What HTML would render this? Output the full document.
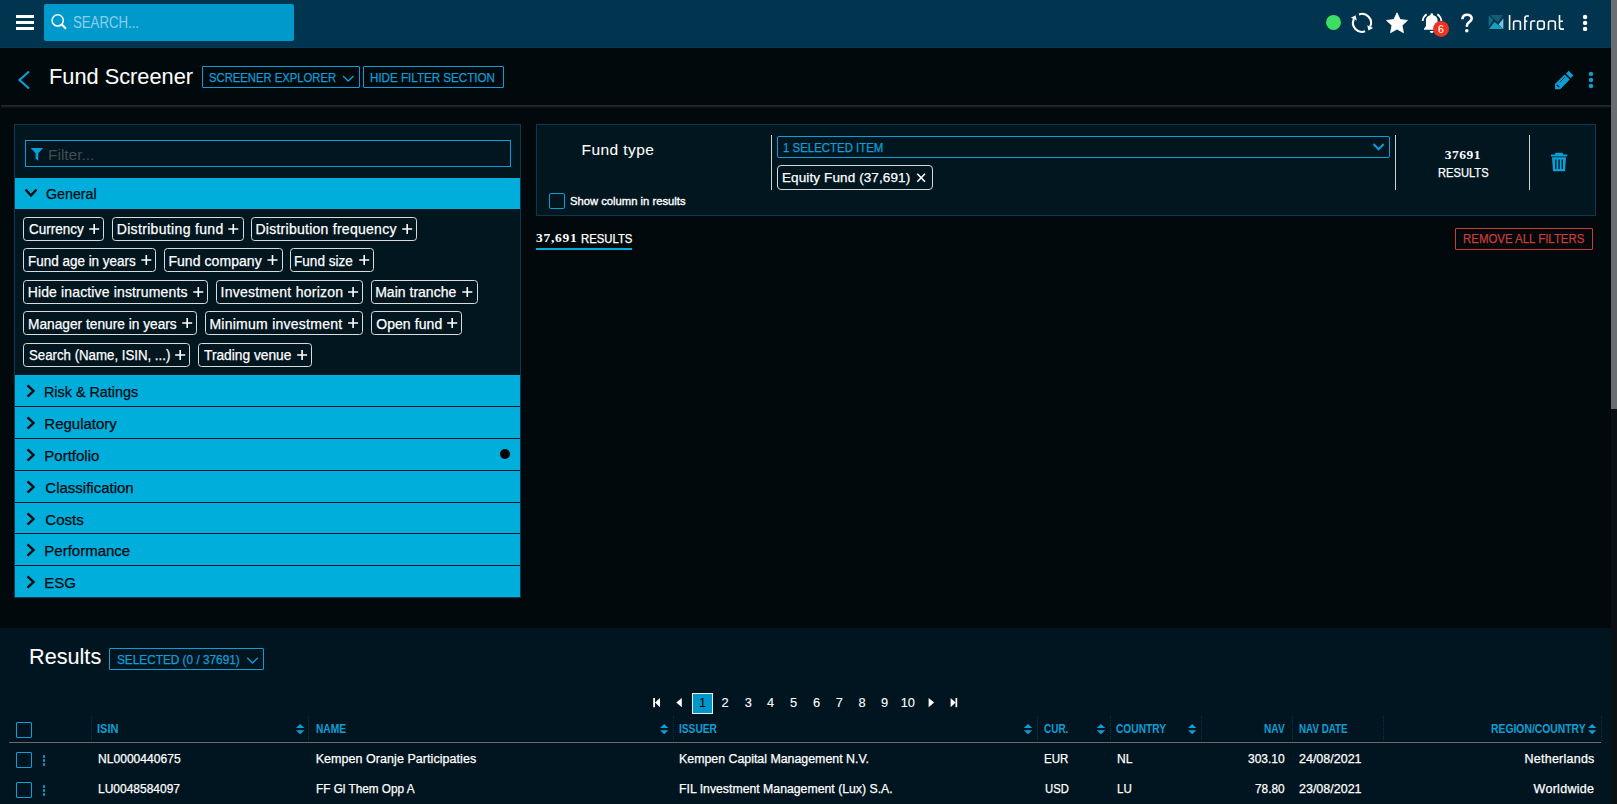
<!DOCTYPE html>
<html><head><meta charset="utf-8"><title>Fund Screener</title>
<style>
html,body{margin:0;padding:0;width:1617px;height:804px;overflow:hidden;background:#01090d;font-family:"Liberation Sans",sans-serif;}
.a{position:absolute;box-sizing:border-box;}
.t{position:absolute;white-space:pre;-webkit-text-stroke:0.25px currentColor;}
svg{position:absolute;overflow:visible;}
</style></head><body>
<!-- header -->
<div class="a" style="left:0;top:0;width:1611px;height:48px;background:#01354f"></div>
<div class="a" style="left:0;top:47px;width:1611px;height:1px;background:#013a56"></div>
<!-- hamburger -->
<div class="a" style="left:16px;top:15px;width:18px;height:3px;background:#fff"></div>
<div class="a" style="left:16px;top:21px;width:18px;height:3px;background:#fff"></div>
<div class="a" style="left:16px;top:27px;width:18px;height:3px;background:#fff"></div>
<!-- search -->
<div class="a" style="left:44px;top:4px;width:250px;height:37px;background:#0099cc;border-radius:2px"></div>
<svg style="left:0;top:0" width="1617" height="804">
  <circle cx="57.7" cy="20.4" r="5.6" fill="none" stroke="#fff" stroke-width="1.5"/>
  <line x1="61.8" y1="24.5" x2="66" y2="28.8" stroke="#fff" stroke-width="2"/>
</svg>
<!-- status icons -->
<svg style="left:0;top:0" width="1617" height="48">
  <circle cx="1333.5" cy="22.4" r="7.5" fill="#3ddf62"/>
  <!-- refresh -->
  <path d="M1358.92 14.44 A9 9 0 0 1 1370.22 26.56" fill="none" stroke="#fff" stroke-width="2.1"/>
  <path d="M1365.08 31.36 A9 9 0 0 1 1353.78 19.24" fill="none" stroke="#fff" stroke-width="2.1"/>
  <path d="M1373.06 28.06 L1367.26 25.35 L1368.38 30.51 Z M1350.94 17.74 L1356.74 20.45 L1355.62 15.29 Z" fill="#fff"/>
  <!-- star -->
  <path d="M1397.00 12.80 L1400.12 19.51 L1407.46 20.40 L1402.04 25.44 L1403.47 32.70 L1397.00 29.10 L1390.53 32.70 L1391.96 25.44 L1386.54 20.40 L1393.88 19.51 Z" fill="#fff" stroke="#fff" stroke-width="0.8" stroke-linejoin="round"/>
  <!-- bell -->
  <circle cx="1431.8" cy="14.6" r="1.3" fill="#fff"/>
  <path d="M1426 26 V20.5 C1426 17.3 1428.5 15 1431.8 15 C1435.1 15 1437.6 17.3 1437.6 20.5 V26 L1439.6 28.7 V29.8 H1424 V28.7 Z" fill="#fff"/>
  <path d="M1429.8 30.9 A2.0 2.0 0 0 0 1433.8 30.9 Z" fill="#fff"/>
  <path d="M1422.6 21.0 A9.4 9.4 0 0 1 1426.6 14.3" fill="none" stroke="#fff" stroke-width="1.8"/>
  <path d="M1437.4 14.3 A9.4 9.4 0 0 1 1441.4 21.0" fill="none" stroke="#fff" stroke-width="1.8"/>
  <circle cx="1441.05" cy="28.95" r="7.95" fill="#ec3420"/>
  <!-- question -->
  <path d="M1462.4 19.2 C1462.4 16.2 1464.5 14.7 1467.1 14.7 C1469.8 14.7 1471.7 16.3 1471.7 18.6 C1471.7 21.3 1468.4 22 1467.4 24 C1467 24.8 1466.9 25.8 1466.9 26.8" fill="none" stroke="#fff" stroke-width="2.6"/>
  <circle cx="1466.8" cy="30.7" r="1.7" fill="#fff"/>
  <!-- infront -->
  <path d="M1509.6 15 V29.9 M1513.6 29.9 V23 Q1513.6 21 1515.6 21 H1518.4 Q1520.4 21 1520.4 23 V29.9 M1524.9 29.9 V18 Q1524.9 16 1526.9 16 H1528.9 M1524.9 21.2 H1527.3 M1530.9 29.9 V23 Q1530.9 21 1532.9 21 H1535.3 M1539.6 21 H1542.2 Q1544.2 21 1544.2 23 V27.1 Q1544.2 29.1 1542.2 29.1 H1539.6 Q1537.6 29.1 1537.6 27.1 V23 Q1537.6 21 1539.6 21 Z M1548.5 29.9 V23 Q1548.5 21 1550.5 21 H1553.3 Q1555.3 21 1555.3 23 V29.9 M1559.5 15 V27.1 Q1559.5 29.1 1561.5 29.1 H1563.9 M1559.5 21.2 H1562.9" fill="none" stroke="#fff" stroke-width="1.6"/>
  <!-- kebab -->
  <circle cx="1585.1" cy="17" r="2.2" fill="#fff"/>
  <circle cx="1585.1" cy="22.9" r="2.2" fill="#fff"/>
  <circle cx="1585.1" cy="28.9" r="2.2" fill="#fff"/>
  <!-- logo -->
  <g>
    <path d="M1488.6 15.6 L1493.4 19.8 L1488.6 26.9 Z" fill="#136b86"/>
    <path d="M1489.6 15.1 L1503.3 15.1 L1497.9 22.3 L1494.3 19.3 Z" fill="#145a72"/>
    <path d="M1488.9 28.9 L1494.5 21.9 L1498.4 24.9 L1503.3 28.9 Z" fill="#1d9cc2"/>
    <path d="M1498.6 24.6 L1503.3 18.6 L1503.3 28.9 Z" fill="#78c7dd"/>
  </g>
</svg>
<!-- scrollbar -->
<div class="a" style="left:1611px;top:0;width:6px;height:804px;background:#0a1013"></div>
<div class="a" style="left:1611px;top:0;width:6px;height:409px;background:#6b6e70"></div>
<!-- title bar -->
<svg style="left:0;top:0" width="1617" height="120">
  <path d="M29 71.5 L19.5 80 L29 88.5" fill="none" stroke="#0c9fd6" stroke-width="2.2"/>
</svg>
<div class="a" style="left:202px;top:66px;width:158px;height:22px;border:1px solid #0c9fd6;border-radius:1px"></div>
<svg style="left:0;top:0" width="1617" height="120">
  <path d="M343 76 L348.2 81 L353.6 76" fill="none" stroke="#0c9fd6" stroke-width="1.3"/>
</svg>
<div class="a" style="left:363px;top:66px;width:141px;height:22px;border:1px solid #0c9fd6;border-radius:1px"></div>
<!-- pencil & kebab -->
<svg style="left:0;top:0" width="1617" height="120">
  <g fill="#0c9fd6">
    <path d="M1566 73.5 L1568.7 70.8 L1573.4 75.4 L1570.6 78.2 Z"/>
    <path d="M1564.6 74.6 L1569.8 79.6 L1560.2 89.2 L1555 89.2 L1555 84 Z"/>
  </g>
  <path d="M1559.6 82.4 L1565 77" stroke="#01090d" stroke-width="0.7"/>
  <path d="M1556.6 84.8 L1559.2 87" stroke="#01090d" stroke-width="1.1"/>
  <circle cx="1591" cy="73.9" r="2.2" fill="#0c9fd6"/>
  <circle cx="1591" cy="80" r="2.2" fill="#0c9fd6"/>
  <circle cx="1591" cy="86" r="2.2" fill="#0c9fd6"/>
</svg>
<div class="a" style="left:1px;top:105px;width:1610px;height:1px;background:#24292c"></div>
<div class="a" style="left:1px;top:106px;width:1610px;height:1px;background:#1a1f22"></div>
<div class="a" style="left:1px;top:107px;width:1610px;height:1px;background:#0d1215"></div>
<!-- filter panel -->
<div class="a" style="left:14px;top:124px;width:507px;height:474px;background:#021620;border:1px solid #0a3a50"></div>
<div class="a" style="left:25px;top:140px;width:486px;height:27px;border:1px solid #0c9fd6;background:#011620"></div>
<svg style="left:0;top:0" width="1617" height="200">
  <path d="M30.7 148 H43.1 L38.3 153.3 V160.8 L35.6 158.5 V153.3 Z" fill="#0c9fd6"/>
</svg>
<!-- General header -->
<div class="a" style="left:15px;top:178px;width:505px;height:31px;background:#00aedc"></div>
<svg style="left:0;top:0" width="1617" height="220">
  <path d="M25.5 189.5 L31 195.5 L36.5 189.5" fill="none" stroke="#00090d" stroke-width="2.4"/>
</svg>
<div class="a" style="left:23px;top:217px;width:81px;height:24px;border:1px solid #dcdcdc;border-radius:3.5px"></div>
<svg style="left:0;top:0" width="1" height="1"><path d="M89.2 229.0 H99.2 M94.2 224.0 V234.0" stroke="#fff" stroke-width="1.6"/></svg>
<div class="a" style="left:112px;top:217px;width:132px;height:24px;border:1px solid #dcdcdc;border-radius:3.5px"></div>
<svg style="left:0;top:0" width="1" height="1"><path d="M228.3 229.0 H238.3 M233.3 224.0 V234.0" stroke="#fff" stroke-width="1.6"/></svg>
<div class="a" style="left:251px;top:217px;width:166px;height:24px;border:1px solid #dcdcdc;border-radius:3.5px"></div>
<svg style="left:0;top:0" width="1" height="1"><path d="M402.2 229.0 H412.2 M407.2 224.0 V234.0" stroke="#fff" stroke-width="1.6"/></svg>
<div class="a" style="left:23px;top:248px;width:133px;height:24px;border:1px solid #dcdcdc;border-radius:3.5px"></div>
<svg style="left:0;top:0" width="1" height="1"><path d="M141.3 260.0 H151.3 M146.3 255.0 V265.0" stroke="#fff" stroke-width="1.6"/></svg>
<div class="a" style="left:164px;top:248px;width:119px;height:24px;border:1px solid #dcdcdc;border-radius:3.5px"></div>
<svg style="left:0;top:0" width="1" height="1"><path d="M267.5 260.0 H277.5 M272.5 255.0 V265.0" stroke="#fff" stroke-width="1.6"/></svg>
<div class="a" style="left:290px;top:248px;width:84px;height:24px;border:1px solid #dcdcdc;border-radius:3.5px"></div>
<svg style="left:0;top:0" width="1" height="1"><path d="M359.2 260.0 H369.2 M364.2 255.0 V265.0" stroke="#fff" stroke-width="1.6"/></svg>
<div class="a" style="left:23px;top:280px;width:185px;height:24px;border:1px solid #dcdcdc;border-radius:3.5px"></div>
<svg style="left:0;top:0" width="1" height="1"><path d="M193.3 292.0 H203.3 M198.3 287.0 V297.0" stroke="#fff" stroke-width="1.6"/></svg>
<div class="a" style="left:216px;top:280px;width:147px;height:24px;border:1px solid #dcdcdc;border-radius:3.5px"></div>
<svg style="left:0;top:0" width="1" height="1"><path d="M348.1 292.0 H358.1 M353.1 287.0 V297.0" stroke="#fff" stroke-width="1.6"/></svg>
<div class="a" style="left:371px;top:280px;width:107px;height:24px;border:1px solid #dcdcdc;border-radius:3.5px"></div>
<svg style="left:0;top:0" width="1" height="1"><path d="M462.3 292.0 H472.3 M467.3 287.0 V297.0" stroke="#fff" stroke-width="1.6"/></svg>
<div class="a" style="left:23px;top:311px;width:174px;height:24px;border:1px solid #dcdcdc;border-radius:3.5px"></div>
<svg style="left:0;top:0" width="1" height="1"><path d="M182.2 323.0 H192.2 M187.2 318.0 V328.0" stroke="#fff" stroke-width="1.6"/></svg>
<div class="a" style="left:205px;top:311px;width:158px;height:24px;border:1px solid #dcdcdc;border-radius:3.5px"></div>
<svg style="left:0;top:0" width="1" height="1"><path d="M348.1 323.0 H358.1 M353.1 318.0 V328.0" stroke="#fff" stroke-width="1.6"/></svg>
<div class="a" style="left:371px;top:311px;width:91px;height:24px;border:1px solid #dcdcdc;border-radius:3.5px"></div>
<svg style="left:0;top:0" width="1" height="1"><path d="M447.2 323.0 H457.2 M452.2 318.0 V328.0" stroke="#fff" stroke-width="1.6"/></svg>
<div class="a" style="left:23px;top:343px;width:167px;height:24px;border:1px solid #dcdcdc;border-radius:3.5px"></div>
<svg style="left:0;top:0" width="1" height="1"><path d="M175.2 355.0 H185.2 M180.2 350.0 V360.0" stroke="#fff" stroke-width="1.6"/></svg>
<div class="a" style="left:198px;top:343px;width:114px;height:24px;border:1px solid #dcdcdc;border-radius:3.5px"></div>
<svg style="left:0;top:0" width="1" height="1"><path d="M297.1 355.0 H307.1 M302.1 350.0 V360.0" stroke="#fff" stroke-width="1.6"/></svg>
<!-- accordions -->
<div class="a" style="left:15px;top:375px;width:505px;height:31px;background:#00aedc"></div>
<svg style="left:0;top:0" width="1" height="1"><path d="M27.5 385.3 L33.5 391 L27.5 396.7" fill="none" stroke="#00090d" stroke-width="2.4"/></svg>
<div class="a" style="left:15px;top:407px;width:505px;height:31px;background:#00aedc"></div>
<svg style="left:0;top:0" width="1" height="1"><path d="M27.5 417.3 L33.5 423 L27.5 428.7" fill="none" stroke="#00090d" stroke-width="2.4"/></svg>
<div class="a" style="left:15px;top:439px;width:505px;height:31px;background:#00aedc"></div>
<svg style="left:0;top:0" width="1" height="1"><path d="M27.5 449.3 L33.5 455 L27.5 460.7" fill="none" stroke="#00090d" stroke-width="2.4"/></svg>
<div class="a" style="left:15px;top:471px;width:505px;height:31px;background:#00aedc"></div>
<svg style="left:0;top:0" width="1" height="1"><path d="M27.5 481.3 L33.5 487 L27.5 492.7" fill="none" stroke="#00090d" stroke-width="2.4"/></svg>
<div class="a" style="left:15px;top:503px;width:505px;height:30px;background:#00aedc"></div>
<svg style="left:0;top:0" width="1" height="1"><path d="M27.5 513.3 L33.5 519 L27.5 524.7" fill="none" stroke="#00090d" stroke-width="2.4"/></svg>
<div class="a" style="left:15px;top:534px;width:505px;height:31px;background:#00aedc"></div>
<svg style="left:0;top:0" width="1" height="1"><path d="M27.5 544.3 L33.5 550 L27.5 555.7" fill="none" stroke="#00090d" stroke-width="2.4"/></svg>
<div class="a" style="left:15px;top:566px;width:505px;height:31px;background:#00aedc"></div>
<svg style="left:0;top:0" width="1" height="1"><path d="M27.5 576.3 L33.5 582 L27.5 587.7" fill="none" stroke="#00090d" stroke-width="2.4"/></svg>
<div class="a" style="left:499.7px;top:449px;width:10px;height:10px;border-radius:50%;background:#000"></div>
<!-- fund type panel -->
<div class="a" style="left:536px;top:124px;width:1060px;height:92px;background:#021620;border:1px solid #0a3a50"></div>
<div class="a" style="left:771px;top:135px;width:1px;height:55px;background:#d0d0d0"></div>
<div class="a" style="left:777px;top:136px;width:613px;height:22px;border:1px solid #0c9fd6;border-radius:2px"></div>
<svg style="left:0;top:0" width="1617" height="260">
  <path d="M1373.5 144 L1378.6 149.3 L1383.7 144" fill="none" stroke="#0c9fd6" stroke-width="2"/>
</svg>
<div class="a" style="left:777px;top:165px;width:156px;height:25px;border:1px solid #d8d8d8;border-radius:4px"></div>
<svg style="left:0;top:0" width="1617" height="260">
  <path d="M917.3 173.8 L925 181.8 M925 173.8 L917.3 181.8" fill="none" stroke="#fff" stroke-width="1.6"/>
</svg>
<div class="a" style="left:549px;top:193px;width:16px;height:16px;border:1px solid #0c9fd6;border-radius:2px"></div>
<div class="a" style="left:1395px;top:135px;width:1px;height:55px;background:#d0d0d0"></div>
<div class="a" style="left:1529px;top:135px;width:1px;height:55px;background:#d0d0d0"></div>
<!-- trash -->
<svg style="left:0;top:0" width="1617" height="260">
  <g fill="#0c9fd6">
    <path d="M1555.5 152.7 h7 l0.8 1.8 h3.9 v2 h-16.2 v-2 h3.9 z"/>
    <path d="M1552 157.3 h14 l-1 13.9 h-12 z"/>
  </g>
  <g fill="#021620">
    <rect x="1555.2" y="159.5" width="1.3" height="9.5"/>
    <rect x="1558.4" y="159.5" width="1.3" height="9.5"/>
    <rect x="1561.6" y="159.5" width="1.3" height="9.5"/>
  </g>
</svg>
<div class="a" style="left:536px;top:248px;width:96px;height:2px;background:#00aedc"></div>
<div class="a" style="left:1455px;top:228px;width:138px;height:22px;border:1px solid #cf3a36;border-radius:1px"></div>
<!-- results section -->
<div class="a" style="left:0;top:628px;width:1611px;height:176px;background:#011520"></div>
<div class="a" style="left:109px;top:648px;width:155px;height:22px;border:1px solid #0c9fd6;border-radius:1px"></div>
<svg style="left:0;top:0" width="1617" height="804">
  <path d="M247.3 657.8 L252.5 663 L257.8 657.8" fill="none" stroke="#0c9fd6" stroke-width="1.3"/>
</svg>
<!-- pagination -->
<div class="a" style="left:692px;top:693px;width:21px;height:21px;background:#0096c9;border:1px solid #e6eef2"></div>
<svg style="left:0;top:0" width="1617" height="804">
  <g fill="#fff">
    <rect x="653.2" y="698" width="1.8" height="9.2"/>
    <path d="M660 698 V707.2 L655 702.6 Z"/>
    <path d="M681.8 698 V707.2 L676.3 702.6 Z"/>
    <path d="M928.6 698 V707.2 L934.1 702.6 Z"/>
    <path d="M950.6 698 V707.2 L955.6 702.6 Z"/>
    <rect x="955.5" y="698" width="1.7" height="9.2"/>
  </g>
</svg>
<div class="a" style="left:16px;top:722px;width:16px;height:16px;border:1px solid #0c9fd6;border-radius:1px"></div>
<div class="a" style="left:16px;top:752px;width:16px;height:16px;border:1px solid #0c9fd6;border-radius:1px"></div>
<div class="a" style="left:42.8px;top:755.2px;width:2.7px;height:2.7px;border-radius:50%;background:#0c9fd6"></div>
<div class="a" style="left:42.8px;top:759.2px;width:2.7px;height:2.7px;border-radius:50%;background:#0c9fd6"></div>
<div class="a" style="left:42.8px;top:763.2px;width:2.7px;height:2.7px;border-radius:50%;background:#0c9fd6"></div>
<div class="a" style="left:16px;top:782px;width:16px;height:16px;border:1px solid #0c9fd6;border-radius:1px"></div>
<div class="a" style="left:42.8px;top:785.2px;width:2.7px;height:2.7px;border-radius:50%;background:#0c9fd6"></div>
<div class="a" style="left:42.8px;top:789.2px;width:2.7px;height:2.7px;border-radius:50%;background:#0c9fd6"></div>
<div class="a" style="left:42.8px;top:793.2px;width:2.7px;height:2.7px;border-radius:50%;background:#0c9fd6"></div>
<div class="a" style="left:9px;top:742px;width:1592px;height:1px;background:#6b6b6b"></div>
<div class="a" style="left:90.5px;top:716px;width:0;height:25px;border-left:1px dotted #0b3344"></div>
<div class="a" style="left:308.4px;top:716px;width:0;height:25px;border-left:1px dotted #0b3344"></div>
<div class="a" style="left:672.6px;top:716px;width:0;height:25px;border-left:1px dotted #0b3344"></div>
<div class="a" style="left:1036.7px;top:716px;width:0;height:25px;border-left:1px dotted #0b3344"></div>
<div class="a" style="left:1109.5px;top:716px;width:0;height:25px;border-left:1px dotted #0b3344"></div>
<div class="a" style="left:1200.8px;top:716px;width:0;height:25px;border-left:1px dotted #0b3344"></div>
<div class="a" style="left:1291.6px;top:716px;width:0;height:25px;border-left:1px dotted #0b3344"></div>
<div class="a" style="left:1382.6px;top:716px;width:0;height:25px;border-left:1px dotted #0b3344"></div>
<div class="a" style="left:1600.5px;top:716px;width:0;height:25px;border-left:1px dotted #0b3344"></div>
<svg style="left:0;top:0" width="1" height="1"><path d="M296.0 728 L300.2 723.9 L304.4 728 Z M296.0 730.2 L300.2 734.3 L304.4 730.2 Z" fill="#0c9fd6"/></svg>
<svg style="left:0;top:0" width="1" height="1"><path d="M660.0 728 L664.2 723.9 L668.4 728 Z M660.0 730.2 L664.2 734.3 L668.4 730.2 Z" fill="#0c9fd6"/></svg>
<svg style="left:0;top:0" width="1" height="1"><path d="M1023.8 728 L1028.0 723.9 L1032.2 728 Z M1023.8 730.2 L1028.0 734.3 L1032.2 730.2 Z" fill="#0c9fd6"/></svg>
<svg style="left:0;top:0" width="1" height="1"><path d="M1096.8 728 L1101.0 723.9 L1105.2 728 Z M1096.8 730.2 L1101.0 734.3 L1105.2 730.2 Z" fill="#0c9fd6"/></svg>
<svg style="left:0;top:0" width="1" height="1"><path d="M1188.0 728 L1192.2 723.9 L1196.4 728 Z M1188.0 730.2 L1192.2 734.3 L1196.4 730.2 Z" fill="#0c9fd6"/></svg>
<svg style="left:0;top:0" width="1" height="1"><path d="M1588.0 728 L1592.2 723.9 L1596.4 728 Z M1588.0 730.2 L1592.2 734.3 L1596.4 730.2 Z" fill="#0c9fd6"/></svg>

<span class="t" style="left:1437.90px;top:23.88px;font-size:10.5px;line-height:10.5px;color:#ffffff;font-weight:400;letter-spacing:0.000px;font-family:'Liberation Sans';-webkit-text-stroke:0.1px #fff">6</span>
<span class="t" style="left:73.00px;top:14.47px;font-size:16.5px;line-height:16.5px;color:#8ccfe9;font-weight:400;letter-spacing:0.000px;font-family:'Liberation Sans';transform:scaleX(0.7994);transform-origin:0 0;-webkit-text-stroke:0.1px #8ccfe9">SEARCH...</span>
<span class="t" style="left:49.23px;top:65.88px;font-size:22.5px;line-height:22.5px;color:#ffffff;font-weight:400;letter-spacing:0.000px;font-family:'Liberation Sans';transform:scaleX(0.9674);transform-origin:0 0;-webkit-text-stroke:0.05px #fff">Fund Screener</span>
<span class="t" style="left:209.00px;top:71.35px;font-size:13px;line-height:13px;color:#0c9fd6;font-weight:400;letter-spacing:0.000px;font-family:'Liberation Sans';transform:scaleX(0.8663);transform-origin:0 0">SCREENER EXPLORER</span>
<span class="t" style="left:370.41px;top:71.35px;font-size:13px;line-height:13px;color:#0c9fd6;font-weight:400;letter-spacing:0.000px;font-family:'Liberation Sans';transform:scaleX(0.8932);transform-origin:0 0">HIDE FILTER SECTION</span>
<span class="t" style="left:47.90px;top:146.82px;font-size:15.5px;line-height:15.5px;color:#454a4c;font-weight:400;letter-spacing:0.000px;font-family:'Liberation Sans';transform:scaleX(0.9977);transform-origin:0 0;-webkit-text-stroke:0">Filter...</span>
<span class="t" style="left:45.70px;top:186.15px;font-size:15px;line-height:15px;color:#00090d;font-weight:400;letter-spacing:0.000px;font-family:'Liberation Sans';transform:scaleX(0.9485);transform-origin:0 0">General</span>
<span class="t" style="left:581.60px;top:141.82px;font-size:15.5px;line-height:15.5px;color:#ffffff;font-weight:400;letter-spacing:0.423px;font-family:'Liberation Sans';-webkit-text-stroke:0.05px #fff">Fund type</span>
<span class="t" style="left:782.80px;top:141.80px;font-size:12px;line-height:12px;color:#0c9fd6;font-weight:400;letter-spacing:0.000px;font-family:'Liberation Sans';transform:scaleX(0.9529);transform-origin:0 0">1 SELECTED ITEM</span>
<span class="t" style="left:782.00px;top:171.03px;font-size:13.5px;line-height:13.5px;color:#ffffff;font-weight:400;letter-spacing:0.112px;font-family:'Liberation Sans'">Equity Fund (37,691)</span>
<span class="t" style="left:569.70px;top:195.53px;font-size:11.5px;line-height:11.5px;color:#ffffff;font-weight:400;letter-spacing:0.000px;font-family:'Liberation Sans';transform:scaleX(0.9773);transform-origin:0 0;-webkit-text-stroke:0.35px #fff">Show column in results</span>
<span class="t" style="left:1444.70px;top:148.33px;font-size:13.5px;line-height:13.5px;color:#ffffff;font-weight:700;letter-spacing:0.500px;font-family:'Liberation Serif';-webkit-text-stroke:0">37691</span>
<span class="t" style="left:1437.70px;top:166.80px;font-size:12px;line-height:12px;color:#ffffff;font-weight:400;letter-spacing:0.000px;font-family:'Liberation Sans';transform:scaleX(0.9292);transform-origin:0 0">RESULTS</span>
<span class="t" style="left:536.10px;top:231.12px;font-size:13.5px;line-height:13.5px;color:#ffffff;font-weight:700;letter-spacing:0.705px;font-family:'Liberation Serif';-webkit-text-stroke:0">37,691</span>
<span class="t" style="left:580.50px;top:232.60px;font-size:12px;line-height:12px;color:#ffffff;font-weight:400;letter-spacing:0.000px;font-family:'Liberation Sans';transform:scaleX(0.9439);transform-origin:0 0">RESULTS</span>
<span class="t" style="left:1462.79px;top:233.28px;font-size:12.5px;line-height:12.5px;color:#cf3a36;font-weight:400;letter-spacing:0.000px;font-family:'Liberation Sans';transform:scaleX(0.9148);transform-origin:0 0">REMOVE ALL FILTERS</span>
<span class="t" style="left:29.04px;top:645.88px;font-size:22.5px;line-height:22.5px;color:#ffffff;font-weight:400;letter-spacing:0.000px;font-family:'Liberation Sans';transform:scaleX(0.9624);transform-origin:0 0;-webkit-text-stroke:0.05px #fff">Results</span>
<span class="t" style="left:116.90px;top:653.50px;font-size:12px;line-height:12px;color:#0c9fd6;font-weight:400;letter-spacing:0.000px;font-family:'Liberation Sans';transform:scaleX(0.9838);transform-origin:0 0">SELECTED (0 / 37691)</span>
<span class="t" style="left:721.50px;top:697.02px;font-size:12.8px;line-height:12.8px;color:#ffffff;font-weight:400;letter-spacing:0.000px;font-family:'Liberation Sans';-webkit-text-stroke:0.1px #fff">2</span>
<span class="t" style="left:744.70px;top:697.02px;font-size:12.8px;line-height:12.8px;color:#ffffff;font-weight:400;letter-spacing:0.000px;font-family:'Liberation Sans';-webkit-text-stroke:0.1px #fff">3</span>
<span class="t" style="left:767.10px;top:697.02px;font-size:12.8px;line-height:12.8px;color:#ffffff;font-weight:400;letter-spacing:0.000px;font-family:'Liberation Sans';-webkit-text-stroke:0.1px #fff">4</span>
<span class="t" style="left:790.00px;top:697.02px;font-size:12.8px;line-height:12.8px;color:#ffffff;font-weight:400;letter-spacing:0.000px;font-family:'Liberation Sans';-webkit-text-stroke:0.1px #fff">5</span>
<span class="t" style="left:813.00px;top:697.02px;font-size:12.8px;line-height:12.8px;color:#ffffff;font-weight:400;letter-spacing:0.000px;font-family:'Liberation Sans';-webkit-text-stroke:0.1px #fff">6</span>
<span class="t" style="left:835.70px;top:697.02px;font-size:12.8px;line-height:12.8px;color:#ffffff;font-weight:400;letter-spacing:0.000px;font-family:'Liberation Sans';-webkit-text-stroke:0.1px #fff">7</span>
<span class="t" style="left:858.50px;top:697.02px;font-size:12.8px;line-height:12.8px;color:#ffffff;font-weight:400;letter-spacing:0.000px;font-family:'Liberation Sans';-webkit-text-stroke:0.1px #fff">8</span>
<span class="t" style="left:881.00px;top:697.02px;font-size:12.8px;line-height:12.8px;color:#ffffff;font-weight:400;letter-spacing:0.000px;font-family:'Liberation Sans';-webkit-text-stroke:0.1px #fff">9</span>
<span class="t" style="left:900.74px;top:697.02px;font-size:12.8px;line-height:12.8px;color:#ffffff;font-weight:400;letter-spacing:0.000px;font-family:'Liberation Sans';-webkit-text-stroke:0.1px #fff">10</span>
<span class="t" style="left:699.00px;top:697.02px;font-size:12.8px;line-height:12.8px;color:#000000;font-weight:400;letter-spacing:0.000px;font-family:'Liberation Sans';-webkit-text-stroke:0">1</span>
<span class="t" style="left:97.40px;top:723.20px;font-size:12px;line-height:12px;color:#0d9fd4;font-weight:700;letter-spacing:0.000px;font-family:'Liberation Sans';transform:scaleX(0.9174);transform-origin:0 0;-webkit-text-stroke:0">ISIN</span>
<span class="t" style="left:315.60px;top:723.20px;font-size:12px;line-height:12px;color:#0d9fd4;font-weight:700;letter-spacing:0.000px;font-family:'Liberation Sans';transform:scaleX(0.8492);transform-origin:0 0;-webkit-text-stroke:0">NAME</span>
<span class="t" style="left:679.30px;top:723.20px;font-size:12px;line-height:12px;color:#0d9fd4;font-weight:700;letter-spacing:0.000px;font-family:'Liberation Sans';transform:scaleX(0.8487);transform-origin:0 0;-webkit-text-stroke:0">ISSUER</span>
<span class="t" style="left:1043.80px;top:723.20px;font-size:12px;line-height:12px;color:#0d9fd4;font-weight:700;letter-spacing:0.000px;font-family:'Liberation Sans';transform:scaleX(0.8311);transform-origin:0 0;-webkit-text-stroke:0">CUR.</span>
<span class="t" style="left:1116.40px;top:723.20px;font-size:12px;line-height:12px;color:#0d9fd4;font-weight:700;letter-spacing:0.000px;font-family:'Liberation Sans';transform:scaleX(0.8508);transform-origin:0 0;-webkit-text-stroke:0">COUNTRY</span>
<span class="t" style="left:1263.80px;top:723.20px;font-size:12px;line-height:12px;color:#0d9fd4;font-weight:700;letter-spacing:0.000px;font-family:'Liberation Sans';transform:scaleX(0.8469);transform-origin:0 0;-webkit-text-stroke:0">NAV</span>
<span class="t" style="left:1298.70px;top:723.20px;font-size:12px;line-height:12px;color:#0d9fd4;font-weight:700;letter-spacing:0.000px;font-family:'Liberation Sans';transform:scaleX(0.8161);transform-origin:0 0;-webkit-text-stroke:0">NAV DATE</span>
<span class="t" style="left:1491.10px;top:723.20px;font-size:12px;line-height:12px;color:#0d9fd4;font-weight:700;letter-spacing:0.000px;font-family:'Liberation Sans';transform:scaleX(0.8635);transform-origin:0 0;-webkit-text-stroke:0">REGION/COUNTRY</span>
<span class="t" style="left:98.23px;top:752.58px;font-size:12.5px;line-height:12.5px;color:#ffffff;font-weight:400;letter-spacing:0.000px;font-family:'Liberation Sans';transform:scaleX(0.9663);transform-origin:0 0">NL0000440675</span>
<span class="t" style="left:315.70px;top:752.58px;font-size:12.5px;line-height:12.5px;color:#ffffff;font-weight:400;letter-spacing:0.052px;font-family:'Liberation Sans'">Kempen Oranje Participaties</span>
<span class="t" style="left:679.31px;top:752.58px;font-size:12.5px;line-height:12.5px;color:#ffffff;font-weight:400;letter-spacing:0.000px;font-family:'Liberation Sans';transform:scaleX(0.9893);transform-origin:0 0">Kempen Capital Management N.V.</span>
<span class="t" style="left:1043.58px;top:752.58px;font-size:12.5px;line-height:12.5px;color:#ffffff;font-weight:400;letter-spacing:0.000px;font-family:'Liberation Sans';transform:scaleX(0.9225);transform-origin:0 0">EUR</span>
<span class="t" style="left:1116.54px;top:752.58px;font-size:12.5px;line-height:12.5px;color:#ffffff;font-weight:400;letter-spacing:0.000px;font-family:'Liberation Sans';transform:scaleX(0.9649);transform-origin:0 0">NL</span>
<span class="t" style="left:1247.80px;top:752.58px;font-size:12.5px;line-height:12.5px;color:#ffffff;font-weight:400;letter-spacing:0.000px;font-family:'Liberation Sans';transform:scaleX(0.9587);transform-origin:0 0">303.10</span>
<span class="t" style="left:1298.70px;top:752.58px;font-size:12.5px;line-height:12.5px;color:#ffffff;font-weight:400;letter-spacing:0.000px;font-family:'Liberation Sans';transform:scaleX(0.9999);transform-origin:0 0">24/08/2021</span>
<span class="t" style="left:1524.60px;top:752.58px;font-size:12.5px;line-height:12.5px;color:#ffffff;font-weight:400;letter-spacing:0.235px;font-family:'Liberation Sans'">Netherlands</span>
<span class="t" style="left:98.24px;top:782.58px;font-size:12.5px;line-height:12.5px;color:#ffffff;font-weight:400;letter-spacing:0.000px;font-family:'Liberation Sans';transform:scaleX(0.9592);transform-origin:0 0">LU0048584097</span>
<span class="t" style="left:315.76px;top:782.58px;font-size:12.5px;line-height:12.5px;color:#ffffff;font-weight:400;letter-spacing:0.000px;font-family:'Liberation Sans';transform:scaleX(0.9416);transform-origin:0 0">FF Gl Them Opp A</span>
<span class="t" style="left:679.32px;top:782.58px;font-size:12.5px;line-height:12.5px;color:#ffffff;font-weight:400;letter-spacing:0.000px;font-family:'Liberation Sans';transform:scaleX(0.9816);transform-origin:0 0">FIL Investment Management (Lux) S.A.</span>
<span class="t" style="left:1044.50px;top:782.58px;font-size:12.5px;line-height:12.5px;color:#ffffff;font-weight:400;letter-spacing:0.000px;font-family:'Liberation Sans';transform:scaleX(0.9027);transform-origin:0 0">USD</span>
<span class="t" style="left:1116.58px;top:782.58px;font-size:12.5px;line-height:12.5px;color:#ffffff;font-weight:400;letter-spacing:0.000px;font-family:'Liberation Sans';transform:scaleX(0.9230);transform-origin:0 0">LU</span>
<span class="t" style="left:1254.90px;top:782.58px;font-size:12.5px;line-height:12.5px;color:#ffffff;font-weight:400;letter-spacing:0.000px;font-family:'Liberation Sans';transform:scaleX(0.9448);transform-origin:0 0">78.80</span>
<span class="t" style="left:1298.70px;top:782.58px;font-size:12.5px;line-height:12.5px;color:#ffffff;font-weight:400;letter-spacing:0.000px;font-family:'Liberation Sans';transform:scaleX(0.9999);transform-origin:0 0">23/08/2021</span>
<span class="t" style="left:1533.50px;top:782.58px;font-size:12.5px;line-height:12.5px;color:#ffffff;font-weight:400;letter-spacing:0.304px;font-family:'Liberation Sans'">Worldwide</span>
<span class="t" style="left:28.70px;top:222.00px;font-size:14px;line-height:14px;color:#ffffff;font-weight:400;letter-spacing:0.000px;font-family:'Liberation Sans';transform:scaleX(0.9631);transform-origin:0 0">Currency</span>
<span class="t" style="left:116.70px;top:222.00px;font-size:14px;line-height:14px;color:#ffffff;font-weight:400;letter-spacing:0.339px;font-family:'Liberation Sans'">Distributing fund</span>
<span class="t" style="left:255.40px;top:222.00px;font-size:14px;line-height:14px;color:#ffffff;font-weight:400;letter-spacing:0.267px;font-family:'Liberation Sans'">Distribution frequency</span>
<span class="t" style="left:27.74px;top:253.50px;font-size:14px;line-height:14px;color:#ffffff;font-weight:400;letter-spacing:0.000px;font-family:'Liberation Sans';transform:scaleX(0.9616);transform-origin:0 0">Fund age in years</span>
<span class="t" style="left:168.40px;top:253.50px;font-size:14px;line-height:14px;color:#ffffff;font-weight:400;letter-spacing:0.063px;font-family:'Liberation Sans'">Fund company</span>
<span class="t" style="left:294.33px;top:253.50px;font-size:14px;line-height:14px;color:#ffffff;font-weight:400;letter-spacing:0.000px;font-family:'Liberation Sans';transform:scaleX(0.9698);transform-origin:0 0">Fund size</span>
<span class="t" style="left:27.70px;top:285.00px;font-size:14px;line-height:14px;color:#ffffff;font-weight:400;letter-spacing:0.142px;font-family:'Liberation Sans'">Hide inactive instruments</span>
<span class="t" style="left:220.50px;top:285.00px;font-size:14px;line-height:14px;color:#ffffff;font-weight:400;letter-spacing:0.253px;font-family:'Liberation Sans'">Investment horizon</span>
<span class="t" style="left:375.20px;top:285.00px;font-size:14px;line-height:14px;color:#ffffff;font-weight:400;letter-spacing:0.014px;font-family:'Liberation Sans'">Main tranche</span>
<span class="t" style="left:27.72px;top:316.50px;font-size:14px;line-height:14px;color:#ffffff;font-weight:400;letter-spacing:0.000px;font-family:'Liberation Sans';transform:scaleX(0.9798);transform-origin:0 0">Manager tenure in years</span>
<span class="t" style="left:209.40px;top:316.50px;font-size:14px;line-height:14px;color:#ffffff;font-weight:400;letter-spacing:0.260px;font-family:'Liberation Sans'">Minimum investment</span>
<span class="t" style="left:376.20px;top:316.50px;font-size:14px;line-height:14px;color:#ffffff;font-weight:400;letter-spacing:0.075px;font-family:'Liberation Sans'">Open fund</span>
<span class="t" style="left:28.70px;top:348.00px;font-size:14px;line-height:14px;color:#ffffff;font-weight:400;letter-spacing:0.000px;font-family:'Liberation Sans';transform:scaleX(0.9461);transform-origin:0 0">Search (Name, ISIN, ...)</span>
<span class="t" style="left:203.70px;top:348.00px;font-size:14px;line-height:14px;color:#ffffff;font-weight:400;letter-spacing:0.000px;font-family:'Liberation Sans';transform:scaleX(0.9821);transform-origin:0 0">Trading venue</span>
<span class="t" style="left:44.34px;top:384.05px;font-size:15px;line-height:15px;color:#00090d;font-weight:400;letter-spacing:0.000px;font-family:'Liberation Sans';transform:scaleX(0.9570);transform-origin:0 0">Risk &amp; Ratings</span>
<span class="t" style="left:44.30px;top:416.05px;font-size:15px;line-height:15px;color:#00090d;font-weight:400;letter-spacing:0.000px;font-family:'Liberation Sans'">Regulatory</span>
<span class="t" style="left:44.30px;top:448.05px;font-size:15px;line-height:15px;color:#00090d;font-weight:400;letter-spacing:0.000px;font-family:'Liberation Sans'">Portfolio</span>
<span class="t" style="left:45.30px;top:480.05px;font-size:15px;line-height:15px;color:#00090d;font-weight:400;letter-spacing:0.000px;font-family:'Liberation Sans'">Classification</span>
<span class="t" style="left:45.30px;top:512.05px;font-size:15px;line-height:15px;color:#00090d;font-weight:400;letter-spacing:0.000px;font-family:'Liberation Sans'">Costs</span>
<span class="t" style="left:44.30px;top:543.05px;font-size:15px;line-height:15px;color:#00090d;font-weight:400;letter-spacing:0.000px;font-family:'Liberation Sans'">Performance</span>
<span class="t" style="left:44.30px;top:575.05px;font-size:15px;line-height:15px;color:#00090d;font-weight:400;letter-spacing:0.000px;font-family:'Liberation Sans'">ESG</span>
</body></html>
